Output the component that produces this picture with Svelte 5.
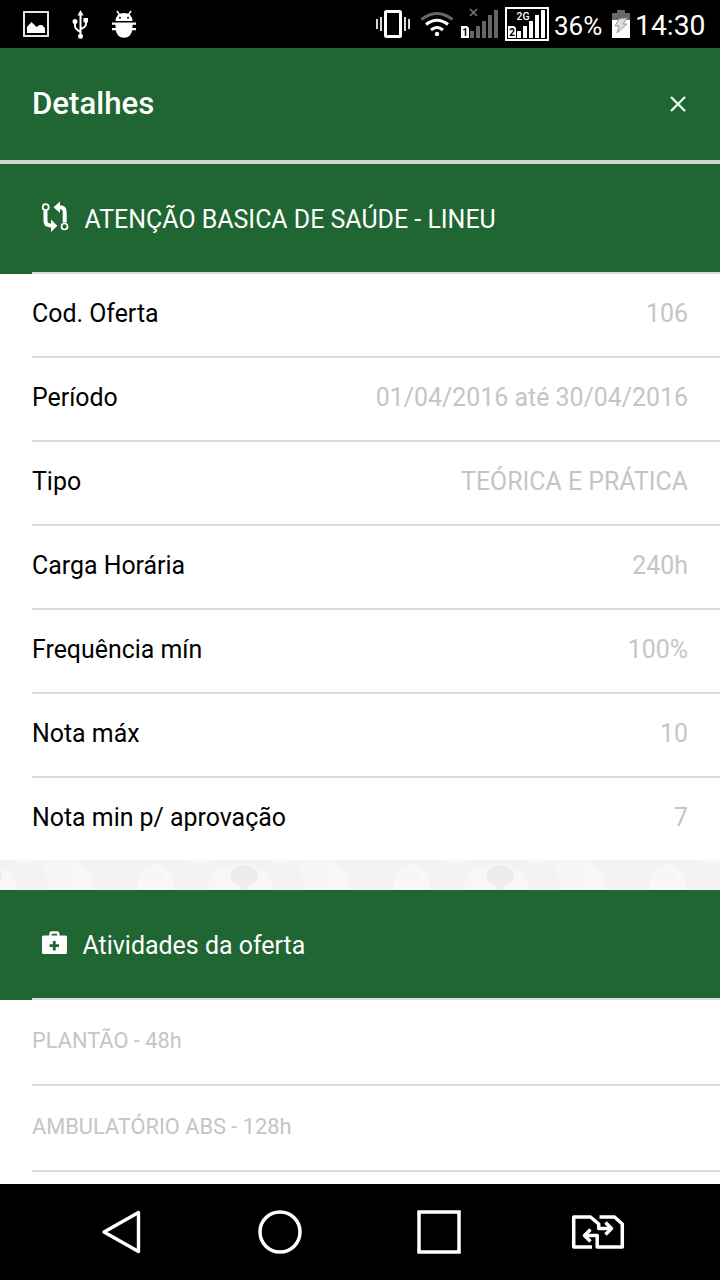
<script>
  const details = [
    ['Cod. Oferta', '106'],
    ['Período', '01/04/2016 até 30/04/2016'],
    ['Tipo', 'TEÓRICA E PRÁTICA'],
    ['Carga Horária', '240h'],
    ['Frequência mín', '100%'],
    ['Nota máx', '10'],
    ['Nota min p/ aprovação', '7']
  ];
  const activities = ['PLANTÃO - 48h', 'AMBULATÓRIO ABS - 128h'];
</script>

<div class="screen">
  <div class="status">
    <div class="group left">
      <svg width="26" height="26" viewBox="23 11 26 26">
        <rect x="24" y="12" width="24" height="24" fill="none" stroke="#e4e4e0" stroke-width="2" />
        <path d="M27 33V27L31.500 22L36.500 27L39.500 25H42L45 28V33Z" fill="#fff" />
      </svg>
      <svg width="17" height="29" viewBox="72 9 17 29">
        <g fill="none" stroke="#fff" stroke-width="2">
          <path d="M80.500 13V35M75 22V25Q75 28 80.500 31M86 20V23Q86 26 80.500 28" />
        </g>
        <path d="M77.500 14.500L80.500 9L83.500 14.500ZM83.500 17H88V21.500H83.500Z" fill="#fff" />
        <circle cx="75" cy="20.500" r="2.500" fill="#fff" />
        <circle cx="80.500" cy="35.300" r="2.500" fill="#fff" />
      </svg>
      <svg width="24" height="28" viewBox="112 10 24 28">
        <path d="M115.500 21Q116 13 124 13T132.500 21Z" fill="#fff" />
        <path d="M117 11L120 15.500M131 11L128 15.500" stroke="#fff" stroke-width="1.600" />
        <circle cx="120" cy="17.800" r="1" /><circle cx="128" cy="17.800" r="1" />
        <path d="M112 22.500H136V24.800H132.500V28H136V30.300H132.200Q131 37.700 124 37.700T115.800 30.300H112V28H115.500V24.800H112Z" fill="#fff" />
      </svg>
    </div>
    <div class="group right">
      <svg width="34" height="28" viewBox="376 10 34 28">
        <rect x="385.500" y="11.500" width="15" height="25" rx="1" fill="none" stroke="#fff" stroke-width="3" />
        <path d="M377 19V29M381 17V31M405 17V31M409 19V29" stroke="#fff" stroke-width="1.700" />
      </svg>
      <svg class="wifi" width="34" height="26" viewBox="420 10 34 26">
        <g fill="none" stroke-width="3">
          <path d="M421.500 18.500Q437 6.500 452.500 18.500" stroke="#666" />
          <path d="M426 23.500Q437 15 448 23.500M431 29Q437 24 443 29" stroke="#fff" />
        </g>
        <circle cx="437" cy="33" r="2.200" fill="#fff" />
      </svg>
      <svg class="sim1" width="38" height="30" viewBox="461 8 38 30">
        <path d="M470 9L477 16M477 9L470 16" stroke="#777" stroke-width="1.600" />
        <path d="M470 31H474V38H470ZM476 26H480V38H476ZM482 21H486V38H482ZM488 15H492V38H488ZM494 10H498V38H494Z" fill="#666" />
        <path d="M461 26H467L469 28V38H461Z" fill="#fff" />
        <text x="465" y="36" font-size="10" font-weight="700" text-anchor="middle">1</text>
      </svg>
      <svg class="sim2" width="44" height="34" viewBox="505 7 44 34">
        <rect x="506" y="8" width="42" height="32" fill="none" stroke="#fff" stroke-width="2" />
        <path d="M517 31H521V38H517ZM523 26H527V38H523ZM529 21H533V38H529ZM535 15H539V38H535ZM541 10H545V38H541Z" fill="#fff" />
        <path d="M508 26H514L516 28V38H508Z" fill="#fff" />
        <text x="512" y="36" font-size="10" font-weight="700" text-anchor="middle">2</text>
        <text x="516.500" y="20" font-size="11.500" font-weight="500" fill="#fff" textLength="13" lengthAdjust="spacingAndGlyphs">2G</text>
      </svg>
      <span class="percent">36%</span>
      <svg width="18" height="28" viewBox="612 10 18 28">
        <path d="M617 10H625V13H630V21H612V13H617Z" fill="#686868" />
        <path d="M612 20H630V38H612Z" fill="#fff" />
        <path d="M619 19L627 18L623 24H627L617 33L619 26H615Z" fill="#ddd" stroke="#999" stroke-width="1" />
      </svg>
      <span class="time">14:30</span>
    </div>
  </div>

  <header>
    <h1>Detalhes</h1>
    <svg width="18" height="18" viewBox="0 0 18 18"><path d="M2 2L16 16M16 2L2 16" stroke="#f5fff0" stroke-width="2.200" /></svg>
  </header>

  <main>
    <section>
      <h2>
        <svg width="28" height="32" viewBox="41 201 28 32">
          <g fill="none" stroke="#fff">
            <circle cx="45.700" cy="207.200" r="3" stroke-width="1.700" />
            <circle cx="64.500" cy="226.500" r="3" stroke-width="1.700" />
            <path d="M45.500 211V221Q45.500 225.500 51 225.500H52M64.700 222.500V212Q64.700 207.200 60 207.200H58" stroke-width="4" />
          </g>
          <path d="M51 219.500L57.300 225.700L51 232ZM60 201.500L53.500 207.200L60 213Z" fill="#fff" />
        </svg>
        <span class="course">ATENÇÃO BASICA DE SAÚDE - LINEU</span>
      </h2>
      {#each details as [label, value]}
        <div class="row"><span>{label}</span><span class="value">{value}</span></div>
      {/each}
    </section>

    <div class="pattern">
      <svg width="720" height="30">
        <defs>
          <pattern id="damask" width="256" height="30" patternUnits="userSpaceOnUse">
            <rect width="256" height="30" fill="#f3f3f3" />
            <path d="M15 0H37Q26 7 15 0Z" fill="#f8f8f8" />
            <path d="M42 3Q54 0 66 0Q92 2 94 30H47Q48 12 42 3Z" fill="#f7f7f7" />
            <ellipse cx="61" cy="16" rx="12" ry="8" fill="#f5f5f5" />
            <path d="M137 30Q138 5 155 4Q173 6 174 30Z" fill="#f8f8f8" />
            <ellipse cx="155" cy="17" rx="9" ry="7" fill="#f6f6f6" />
            <path d="M188 0Q200 7 213 0ZM208 30Q210 4 244 4Q254 4 256 8V30Z" fill="#f7f7f7" />
            <path d="M0 8Q16 12 18 30H0Z" fill="#f7f7f7" />
            <path d="M230 16Q233 6 244 5Q255 6 258 16Q254 25 247 25L250 30H239L242 25Q233 25 230 16Z" fill="#ececec" />
            <path d="M0 11Q4 16 0 22Z" fill="#ececec" />
          </pattern>
        </defs>
        <rect width="720" height="30" fill="url(#damask)" />
      </svg>
    </div>

    <section>
      <h2>
        <svg class="kit" width="26" height="24" viewBox="41 931 26 24">
          <path d="M50.500 936V933.700Q50.500 932.500 51.700 932.500H57Q58.300 932.500 58.300 933.700V936" fill="none" stroke="#fff" stroke-width="2.400" />
          <rect x="42" y="935.500" width="25" height="18.500" rx="1.600" fill="#fff" />
          <path d="M54.300 941V950.500M49.500 945.700H59" stroke="#206633" stroke-width="2.800" />
        </svg>
        <span class="activities">Atividades da oferta</span>
      </h2>
      {#each activities as activity}
        <div class="row activity"><span>{activity}</span></div>
      {/each}
    </section>
  </main>

  <nav>
    <svg width="40" height="44" viewBox="101 1210 40 44"><path d="M138.500 1212.500V1251.500L104 1232Z" fill="none" stroke="#fff" stroke-width="3.400" stroke-linejoin="round" /></svg>
    <svg class="home" width="44" height="44" viewBox="0 0 44 44"><circle cx="22" cy="22" r="20" fill="none" stroke="#fff" stroke-width="3.500" /></svg>
    <svg class="recent" width="44" height="44" viewBox="0 0 44 44"><rect x="2" y="2" width="40" height="40" fill="none" stroke="#fff" stroke-width="3.500" /></svg>
    <svg class="swap" width="54" height="36" viewBox="571 1214 54 36">
      <g fill="none" stroke="#fff" stroke-width="3.500" stroke-linejoin="round">
        <path d="M592 1247H573.700V1217H590.500L598.700 1224V1228.500H611M599.500 1217H614.500L622.300 1224V1247H597.200V1235.500H585" />
        <path d="M605.500 1222.500L611.500 1228.500L605.500 1234.500M590.500 1229.500L584.500 1235.500L590.500 1241.500" />
      </g>
    </svg>
  </nav>
</div>

<style>
  :global(body) { margin: 0; overflow: hidden; }
  .screen {
    width: 720px; height: 1280px; display: flex; flex-direction: column;
    overflow: hidden; background: #fff; color: #000; font-family: Roboto, sans-serif;
  }
  svg { display: block; flex: none; }
  .status {
    height: 48px; flex: none; background: #000; color: #fff; display: flex;
    justify-content: space-between; align-items: center; box-sizing: border-box; padding: 0 15px 0 23px;
  }
  .group { display: flex; align-items: center; }
  .left { gap: 23px; }
  .wifi { margin-left: 10px; }
  .sim1 { margin: 0 6px 2px 7px; }
  .percent { font-size: 26px; width: 49px; margin: 3px 9px 0 5px; white-space: nowrap; }
  .time { font-size: 28.3px; width: 70px; margin: 3px 0 0 5px; white-space: nowrap; }
  header {
    height: 112px; flex: none; box-sizing: border-box; padding: 0 33px 0 32px; background: #206633;
    display: flex; align-items: center; justify-content: space-between; color: #fff;
  }
  h1 { margin: 0; font-size: 31.2px; font-weight: 500; line-height: 40px; }
  main { flex: 1; min-height: 0; overflow: hidden; border-top: 4px solid #d3d6d0; }
  h2 {
    margin: 0; height: 110px; box-sizing: border-box; padding: 0 0 0 41px; color: #fff;
    font-size: 24.95px; font-weight: 400; display: flex; align-items: center;
    background: linear-gradient(#ddd, #ddd) 32px 108px / 688px 2px no-repeat, #206633;
  }
  h2 svg { margin-bottom: 4px; }
  .course { margin-left: 15.5px; }
  .activities { margin-left: 15.5px; }
  .row {
    height: 84px; margin-left: 32px; padding: 0 32px 4px 0; box-sizing: border-box;
    border-bottom: 2px solid #ddd; display: flex; align-items: center;
    justify-content: space-between; font-size: 24.9px;
  }
  .row:last-child { height: 82px; border-bottom: 0; padding-bottom: 4px; }
  .value { color: #c5c5c5; }
  .pattern { height: 30px; }
  .row.activity, .row.activity:last-child {
    height: 86px; border-bottom: 2px solid #ddd; color: #c5c5c5; font-size: 21.8px; padding-bottom: 4px;
  }
  nav { height: 96px; flex: none; background: #000; display: flex; align-items: center; box-sizing: border-box; padding-left: 101px; }
  .home { margin-left: 117px; }
  .recent { margin-left: 115px; }
  .swap { margin-left: 110px; }
</style>
